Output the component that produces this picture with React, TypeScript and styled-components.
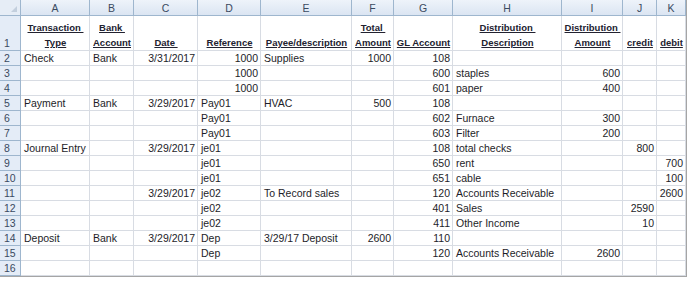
import styled, { createGlobalStyle } from 'styled-components'

const GlobalStyle = createGlobalStyle`
  body {
    margin: 0;
    background: #ffffff;
  }
`

const COLS = [69, 44, 64, 63, 91, 42, 59, 109, 61, 34, 29]
const LETTERS = ['A', 'B', 'C', 'D', 'E', 'F', 'G', 'H', 'I', 'J', 'K']

type Align = 'left' | 'right' | 'center'

const Sheet = styled.div`
  display: grid;
  grid-template-columns: 21px ${COLS.map((w) => `${w}px`).join(' ')};
  grid-template-rows: 16px 35px repeat(15, 15px);
  width: 686px;
  border-right: 1px solid #a5a5a5;
  border-bottom: 1px solid #a5a5a5;
  font-family: 'Liberation Sans', Arial, sans-serif;
  font-size: 10.5px;
  color: #1d1d28;
  background: #fff;
`

const Corner = styled.div`
  position: relative;
  background: #e6edf6;
  border-right: 1px solid #9eb6ce;
  border-bottom: 1px solid #9eb6ce;
  box-sizing: border-box;
  &::after {
    content: '';
    position: absolute;
    right: 3px;
    bottom: 3px;
    border-left: 6px solid transparent;
    border-bottom: 6px solid #c3cfdd;
  }
`

const ColHead = styled.div`
  display: flex;
  align-items: center;
  justify-content: center;
  box-sizing: border-box;
  background: linear-gradient(#eef3fa, #dbe5f2);
  border-right: 1px solid #9eb6ce;
  border-bottom: 1px solid #9eb6ce;
  color: #3a4a60;
  font-size: 10.5px;
`

const RowHead = styled.div`
  display: flex;
  align-items: flex-end;
  justify-content: flex-start;
  padding-left: 4px;
  box-sizing: border-box;
  background: #e4ecf7;
  border-right: 1px solid #9eb6ce;
  border-bottom: 1px solid #9eb6ce;
  color: #3a4a60;
  line-height: 14px;
`

const Cell = styled.div<{ $align?: Align }>`
  display: flex;
  align-items: flex-end;
  justify-content: ${(p) =>
    p.$align === 'right' ? 'flex-end' : p.$align === 'center' ? 'center' : 'flex-start'};
  box-sizing: border-box;
  padding: 0 2px 0 3px;
  border-right: 1px solid #d8dce3;
  border-bottom: 1px solid #d8dce3;
  white-space: pre;
  overflow: visible;
  line-height: 14px;
`

const TitleCell = styled(Cell)`
  flex-direction: column;
  align-items: center;
  justify-content: flex-end;
  font-weight: bold;
  font-size: 9.5px;
  line-height: 15px;
  color: #222230;
`

const TitleLine = styled.span`
  text-decoration: underline;
  white-space: pre;
`

const titles: string[][] = [
  ['Transaction ', 'Type'],
  ['Bank ', 'Account'],
  ['Date '],
  ['Reference'],
  ['Payee/description'],
  ['Total ', 'Amount'],
  ['GL Account'],
  ['Distribution ', 'Description'],
  ['Distribution ', 'Amount'],
  ['credit'],
  ['debit'],
]

// [text, align] per column A..K
type Entry = [string, Align] | null
const R = (t: string): Entry => [t, 'right']
const L = (t: string): Entry => [t, 'left']
const _ = null

const rows: Entry[][] = [
  [L('Check'), L('Bank'), R('3/31/2017'), R('1000'), L('Supplies'), R('1000'), R('108'), _, _, _, _],
  [_, _, _, R('1000'), _, _, R('600'), L('staples'), R('600'), _, _],
  [_, _, _, R('1000'), _, _, R('601'), L('paper'), R('400'), _, _],
  [L('Payment'), L('Bank'), R('3/29/2017'), L('Pay01'), L('HVAC'), R('500'), R('108'), _, _, _, _],
  [_, _, _, L('Pay01'), _, _, R('602'), L('Furnace'), R('300'), _, _],
  [_, _, _, L('Pay01'), _, _, R('603'), L('Filter'), R('200'), _, _],
  [L('Journal Entry'), _, R('3/29/2017'), L('je01'), _, _, R('108'), L('total checks'), _, R('800'), _],
  [_, _, _, L('je01'), _, _, R('650'), L('rent'), _, _, R('700')],
  [_, _, _, L('je01'), _, _, R('651'), L('cable'), _, _, R('100')],
  [_, _, R('3/29/2017'), L('je02'), L('To Record sales'), _, R('120'), L('Accounts Receivable'), _, _, R('2600')],
  [_, _, _, L('je02'), _, _, R('401'), L('Sales'), _, R('2590'), _],
  [_, _, _, L('je02'), _, _, R('411'), L('Other Income'), _, R('10'), _],
  [L('Deposit'), L('Bank'), R('3/29/2017'), L('Dep'), L('3/29/17 Deposit'), R('2600'), R('110'), _, _, _, _],
  [_, _, _, L('Dep'), _, _, R('120'), L('Accounts Receivable'), R('2600'), _, _],
  [_, _, _, _, _, _, _, _, _, _, _],
]

const App = (): JSX.Element => {
  return (
    <>
      <GlobalStyle />
      <Sheet>
        <Corner />
        {LETTERS.map((l) => (
          <ColHead key={l}>{l}</ColHead>
        ))}
        <RowHead>1</RowHead>
        {titles.map((lines, i) => (
          <TitleCell key={i} $align="center">
            {lines.map((t) => (
              <TitleLine key={t}>{t}</TitleLine>
            ))}
          </TitleCell>
        ))}
        {rows.map((row, r) => [
          <RowHead key={`h${r}`}>{r + 2}</RowHead>,
          ...row.map((e, c) => (
            <Cell key={`${r}-${c}`} $align={e ? e[1] : 'left'}>
              {e ? e[0] : ''}
            </Cell>
          )),
        ])}
      </Sheet>
    </>
  )
}

export default App
